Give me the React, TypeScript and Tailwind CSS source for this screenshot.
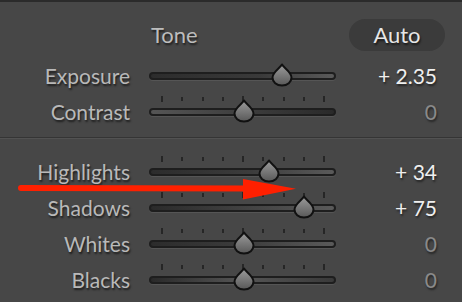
const sliders = [
  { label: 'Exposure', value: '+ 2.35', pos: 133, ticks: false, track: 'bg-[linear-gradient(to_right,#2c2c2c,#3a3a3a_60%,#5a5a5a)]' },
  { label: 'Contrast', value: '0', pos: 95, ticks: true, track: 'bg-[linear-gradient(to_right,#555555,#3e3e3e_50%,#2a2a2a)]' },
];

const sliders2 = [
  { label: 'Highlights', value: '+ 34', pos: 120, ticks: true, track: 'bg-[linear-gradient(to_right,#2c2c2c,#3c3c3c_55%,#5a5a5a)]' },
  { label: 'Shadows', value: '+ 75', pos: 155, ticks: true, track: 'bg-[linear-gradient(to_right,#2a2a2a,#4a4a4a_70%,#5a5a5a)]' },
  { label: 'Whites', value: '0', pos: 95, ticks: true, track: 'bg-[linear-gradient(to_right,#2c2c2c,#3c3c3c_50%,#5a5a5a)]' },
  { label: 'Blacks', value: '0', pos: 95, ticks: true, track: 'bg-[linear-gradient(to_right,#2a2a2a,#555555_50%,#3a3a3a)]' },
];

type Row = (typeof sliders)[number];

function Thumb({ x }: { x: number }) {
  return (
    <svg
      width="24"
      height="24"
      viewBox="0 0 24 24"
      className="absolute top-[-9px]"
      style={{ left: x - 12 }}
    >
      <defs>
        <linearGradient id="thumbFill" x1="0" y1="0" x2="0" y2="1">
          <stop offset="0" stopColor="#9c9c9c" />
          <stop offset="1" stopColor="#585858" />
        </linearGradient>
      </defs>
      <path
        d="M12 1.5 C13.5 4.5 21.5 9 21.5 14.5 C21.5 19 17.5 22.5 12 22.5 C6.5 22.5 2.5 19 2.5 14.5 C2.5 9 10.5 4.5 12 1.5 Z"
        fill="url(#thumbFill)"
        stroke="#111"
        strokeWidth="2"
        strokeLinejoin="round"
      />
    </svg>
  );
}

function SliderRow({ row }: { row: Row }) {
  const zero = row.value === '0';
  return (
    <div className="grid h-[36px] grid-cols-[130px_187px_82px] items-center gap-x-[19px]">
      <span className="text-right text-[21px] leading-none text-[#b9b9b9] [text-shadow:1px_2px_2px_rgba(0,0,0,0.6)]">
        {row.label}
      </span>
      <div className="relative mt-[2px] h-[8px]">
        {row.ticks && (
          <div className="absolute left-[12px] top-[-12px] flex w-[164px] items-start justify-between">
            {Array.from({ length: 9 }).map((_, i) => (
              <div
                key={i}
                className={
                  i === 0 || i === 4 || i === 8
                    ? 'h-[6px] w-[2px] bg-[#262626]'
                    : 'mt-[1px] h-[4px] w-[2px] bg-[#262626]'
                }
              />
            ))}
          </div>
        )}
        <div
          className={`h-[8px] rounded-full border-2 border-[#1e1e1e] shadow-[0_1px_0_rgba(255,255,255,0.08)] ${row.track}`}
        />
        <Thumb x={row.pos} />
      </div>
      <span
        className={`text-right text-[21px] leading-none [text-shadow:1px_2px_2px_rgba(0,0,0,0.5)] ${
          zero ? 'text-[#8a8a8a]' : 'text-[#efefef]'
        }`}
      >
        {row.value}
      </span>
    </div>
  );
}

export default function App() {
  return (
    <div className="relative h-[302px] w-[462px] overflow-hidden border-t-2 border-[#2b2b2b] bg-[#474747] font-['Lato',sans-serif]">
      {/* Header */}
      <div className="flex h-[55px] items-start pt-[17px]">
        <span className="ml-[151px] mt-[5px] text-[22px] leading-none text-[#bdbdbd] [text-shadow:1px_2px_2px_rgba(0,0,0,0.6)]">
          Tone
        </span>
        <div className="ml-auto mr-[17px] flex h-[32px] w-[96px] items-center justify-center rounded-full bg-[#3b3b3b] text-[22px] leading-none text-[#e6e6e6] [text-shadow:1px_2px_2px_rgba(0,0,0,0.6)]">
          Auto
        </div>
      </div>

      {sliders.map((row) => (
        <SliderRow key={row.label} row={row} />
      ))}

      {/* Divider */}
      <div className="mb-[14px] mt-[8px] border-t border-b border-t-[#353535] border-b-[#525252]" />

      {sliders2.map((row) => (
        <SliderRow key={row.label} row={row} />
      ))}

      {/* Red annotation arrow */}
      <svg className="absolute left-0 top-0" width="462" height="302" viewBox="0 0 462 302">
        <line x1="21" y1="186" x2="250" y2="186.5" stroke="#ff2000" strokeWidth="6" strokeLinecap="round" />
        <polygon points="243,177 296,186.8 243,197.5" fill="#ff2000" />
      </svg>
    </div>
  );
}
